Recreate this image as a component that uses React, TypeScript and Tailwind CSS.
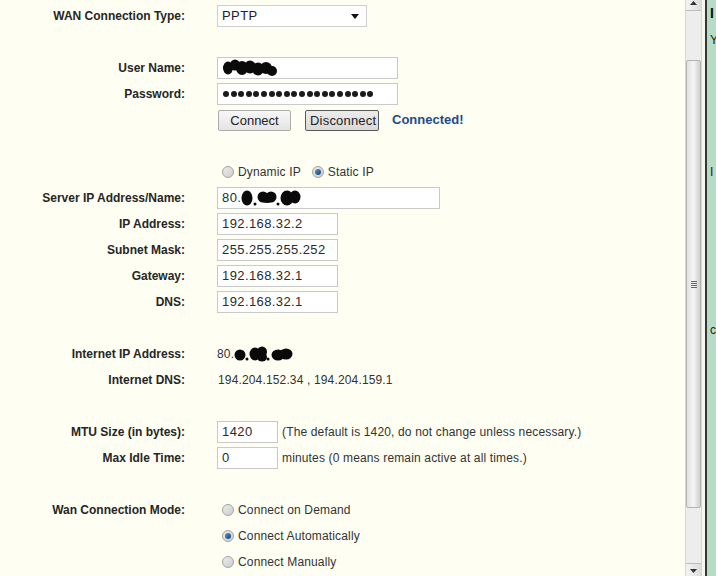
import React from "react";

const F = { fontFamily: '"Liberation Sans", Arial, sans-serif' };

function Row({ label, children }: { label?: string; children?: React.ReactNode }) {
  return (
    <div className="flex h-[26px] items-center">
      <div className="w-[185px] shrink-0 text-right text-[12px] font-bold text-[#262626]">{label}</div>
      <div className="ml-[32px] flex items-center">{children}</div>
    </div>
  );
}

function TextBox({ w, children }: { w: string; children?: React.ReactNode }) {
  return (
    <div className={`${w} flex h-[22px] items-center border border-[#c9c9c9] bg-white pl-[4px] text-[13px] tracking-[0.4px] text-[#2b2b2b]`}>
      {children}
    </div>
  );
}

function Radio({ on }: { on?: boolean }) {
  return (
    <span className="flex h-[12px] w-[12px] items-center justify-center rounded-full border border-[#a3a3a3] bg-gradient-to-br from-[#ececec] to-[#cdcdcd]">
      {on && <span className="h-[6px] w-[6px] rounded-full bg-gradient-to-br from-[#5a9ad0] to-[#0e3f73]" />}
    </span>
  );
}

function Blob({ w, h, parts }: { w: number; h: number; parts: [number, number, number, number][] }) {
  return (
    <svg width={w} height={h} viewBox={`0 0 ${w} ${h}`} className="block">
      {parts.map((p, i) => (
        <ellipse key={i} cx={p[0]} cy={p[1]} rx={p[2]} ry={p[3]} fill="#0a0a0a" />
      ))}
    </svg>
  );
}

function RadioOpt({ on, text }: { on?: boolean; text: string }) {
  return (
    <div className="flex items-center pl-[5px]">
      <Radio on={on} />
      <span className="ml-[4px] text-[12px] tracking-[0.15px] text-[#333]">{text}</span>
    </div>
  );
}

export default function App() {
  return (
    <div className="flex h-[576px] w-[716px] overflow-hidden bg-[#fefef2]" style={F}>
      <div className="w-[685px] shrink-0 pt-[3px]">
        <Row label="WAN Connection Type:">
          <div className="flex h-[22px] w-[150px] items-center justify-between border border-[#cfcfcf] bg-white pl-[4px] pr-[7px] text-[13px] tracking-[0.4px] text-[#222]">
            <span>PPTP</span>
            <svg width="8" height="5" viewBox="0 0 8 5"><path d="M0 0h8L4 5z" fill="#111" /></svg>
          </div>
        </Row>
        <Row />
        <Row label="User Name:">
          <TextBox w="w-[181px]">
            <Blob w={56} h={20} parts={[[6, 10, 5, 6.5], [13, 7, 5, 5.5], [20, 10, 6, 7], [28, 9, 6, 6.5], [36, 11, 6, 6.5], [44, 10, 6, 6], [50, 13, 5, 5]]} />
          </TextBox>
        </Row>
        <Row label="Password:">
          <TextBox w="w-[181px]">
            <div className="flex gap-[1.6px] pl-[1px]">
              {Array.from({ length: 20 }).map((_, i) => (
                <span key={i} className="h-[6px] w-[6px] rounded-full bg-[#1a1a1a]" />
              ))}
            </div>
          </TextBox>
        </Row>
        <Row>
          <button className="ml-[1px] h-[21px] w-[73px] rounded-[2px] border border-[#acacac] bg-gradient-to-b from-[#f7f7f7] to-[#e4e4e4] text-[13px] text-[#222]">Connect</button>
          <button className="ml-[14px] h-[21px] w-[74px] overflow-hidden whitespace-nowrap rounded-[2px] border border-[#5a5a5a] bg-gradient-to-b from-[#ececec] to-[#d9d9d9] pl-[4px] text-left text-[13px] tracking-[0.2px] text-[#222]">Disconnect</button>
          <span className="ml-[13px] text-[13px] font-bold text-[#234b86]">Connected!</span>
        </Row>
        <Row />
        <Row>
          <div className="flex items-center">
            <RadioOpt text="Dynamic IP" />
            <div className="ml-[11px] flex items-center">
              <Radio on />
              <span className="ml-[4px] text-[12px] tracking-[0.15px] text-[#333]">Static IP</span>
            </div>
          </div>
        </Row>
        <Row label="Server IP Address/Name:">
          <TextBox w="w-[223px]">
            <span>80.</span>
            <Blob w={66} h={18} parts={[[6, 9, 5.5, 7.5], [14, 15, 1.5, 1.5], [22, 8, 5.5, 5.5], [30, 8, 5.5, 5.5], [26, 11, 6, 3], [37, 15, 1.5, 1.5], [46, 9, 6.5, 7.5], [54, 8, 5.5, 6.5]]} />
          </TextBox>
        </Row>
        <Row label="IP Address:"><TextBox w="w-[121px]">192.168.32.2</TextBox></Row>
        <Row label="Subnet Mask:"><TextBox w="w-[121px]">255.255.255.252</TextBox></Row>
        <Row label="Gateway:"><TextBox w="w-[121px]">192.168.32.1</TextBox></Row>
        <Row label="DNS:"><TextBox w="w-[121px]">192.168.32.1</TextBox></Row>
        <Row />
        <Row label="Internet IP Address:">
          <span className="text-[12px] tracking-[0.15px] text-[#333]">80.</span>
          <Blob w={72} h={16} parts={[[6, 9, 5.5, 5.5], [13, 13, 1.5, 1.5], [21, 8, 5.5, 6.5], [28, 6, 5, 5.5], [28, 11, 5, 4.5], [34, 13, 1.5, 1.5], [44, 9, 6.5, 5.5], [52, 8, 6.5, 5.5]]} />
        </Row>
        <Row label="Internet DNS:">
          <span className="pl-[1px] text-[12px] tracking-[0.15px] text-[#333]">194.204.152.34 , 194.204.159.1</span>
        </Row>
        <Row />
        <Row label="MTU Size (in bytes):">
          <TextBox w="w-[61px]">1420</TextBox>
          <span className="ml-[4px] text-[12px] tracking-[0.15px] text-[#333]">(The default is 1420, do not change unless necessary.)</span>
        </Row>
        <Row label="Max Idle Time:">
          <TextBox w="w-[61px]">0</TextBox>
          <span className="ml-[4px] text-[12px] tracking-[0.15px] text-[#333]">minutes (0 means remain active at all times.)</span>
        </Row>
        <Row />
        <Row label="Wan Connection Mode:"><RadioOpt text="Connect on Demand" /></Row>
        <Row><RadioOpt on text="Connect Automatically" /></Row>
        <Row><RadioOpt text="Connect Manually" /></Row>
      </div>

      {/* scrollbar */}
      <div className="flex h-full w-[17px] shrink-0 flex-col border-x border-[#d6d6d6] bg-[#ededed]">
        <div className="flex h-[11px] items-end justify-center border-b border-[#bdbdbd] bg-gradient-to-r from-[#f4f4f4] to-[#dcdcdc]">
          <svg width="7" height="4" viewBox="0 0 7 4" className="mb-[5px]"><path d="M0 4h7L3.5 0z" fill="#333" /></svg>
        </div>
        <div className="h-[49px]" />
        <div className="flex h-[448px] items-center justify-center rounded-[2px] border border-[#b3b3b3] bg-gradient-to-r from-[#e2e2e2] via-[#f5f5f5] to-[#cfcfcf]">
          <div className="flex flex-col gap-[1px]">
            <span className="h-[1px] w-[6px] bg-[#666]" />
            <span className="h-[1px] w-[6px] bg-[#666]" />
            <span className="h-[1px] w-[6px] bg-[#666]" />
            <span className="h-[1px] w-[6px] bg-[#666]" />
          </div>
        </div>
        <div className="flex-1" />
        <div className="flex h-[13px] items-start justify-center border-t border-[#bdbdbd] bg-gradient-to-r from-[#f4f4f4] to-[#dcdcdc]">
          <svg width="7" height="4" viewBox="0 0 7 4" className="mt-[5px]"><path d="M0 0h7L3.5 4z" fill="#333" /></svg>
        </div>
      </div>
      <div className="w-[3px] shrink-0 bg-[#f6f6ee]" />
      <div className="w-[2px] shrink-0 bg-[#2e3a33]" />
      <div className="flex-1 overflow-hidden bg-[#b7dcc6] pl-[3px] text-[12px] text-[#222]">
        <div className="pt-[5px] text-[14px] font-bold leading-[16px] text-[#111]">I</div>
        <div className="mt-[12px] leading-[14px]">Y</div>
        <div className="mt-[118px] leading-[14px]">I</div>
        <div className="mt-[144px] leading-[14px]">c</div>
      </div>
    </div>
  );
}
